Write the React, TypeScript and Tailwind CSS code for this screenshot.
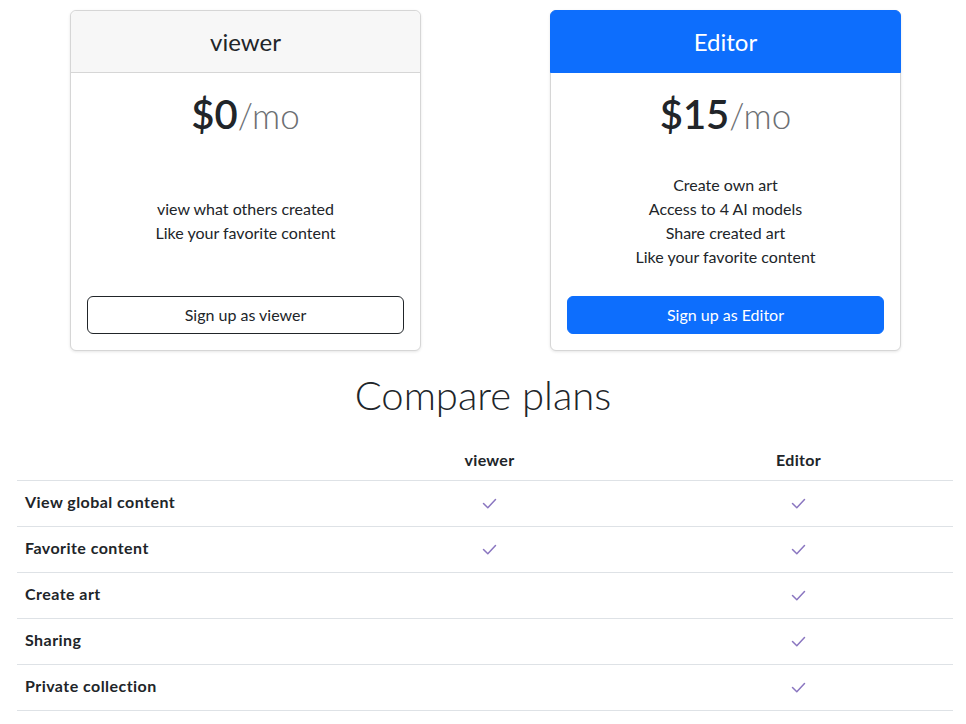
import React from "react";

const Check = () => (
  <svg width="15" height="13" viewBox="0 0 15 13" fill="none" className="inline-block">
    <path d="M1.5 6.5 L5.8 10.8 L13.5 2.5" stroke="#8a76c0" strokeWidth="1.5" strokeLinecap="round" strokeLinejoin="round" />
  </svg>
);

type Plan = {
  name: string;
  price: string;
  items: string[];
  cta: string;
  primary: boolean;
};

const plans: Plan[] = [
  {
    name: "viewer",
    price: "$0",
    items: ["view what others created", "Like your favorite content"],
    cta: "Sign up as viewer",
    primary: false,
  },
  {
    name: "Editor",
    price: "$15",
    items: ["Create own art", "Access to 4 AI models", "Share created art", "Like your favorite content"],
    cta: "Sign up as Editor",
    primary: true,
  },
];

const rows: { label: string; viewer: boolean; editor: boolean }[] = [
  { label: "View global content", viewer: true, editor: true },
  { label: "Favorite content", viewer: true, editor: true },
  { label: "Create art", viewer: false, editor: true },
  { label: "Sharing", viewer: false, editor: true },
  { label: "Private collection", viewer: false, editor: true },
];

function Card({ plan }: { plan: Plan }) {
  return (
    <div className="w-[351px] h-[341px] rounded-[6px] border border-[#d6d6d6] bg-white flex flex-col shadow-[0_1px_3px_rgba(0,0,0,0.1)]">
      <div
        className={
          "h-[62px] shrink-0 flex items-center justify-center text-[24px] border-b rounded-t-[6px] " +
          (plan.primary
            ? "bg-[#0d6efd] text-white border-[#0d6efd] -mx-px -mt-px h-[63px] border-x border-t"
            : "bg-[#f7f7f7] text-[#212529] border-[#d6d6d6]")
        }
      >
        {plan.name}
      </div>
      <div className="flex-1 flex flex-col px-4 pt-4 pb-4">
        <div className="h-[48px] leading-[50px] text-center text-[40px] font-semibold text-[#212529]">
          {plan.price}
          <span className="text-[35px] font-light text-[#6c6f73]">/mo</span>
        </div>
        <ul className="flex-1 flex flex-col justify-center mt-[16px] mb-[7px] text-center text-[16px] leading-[24px] text-[#212529]">
          {plan.items.map((it) => (
            <li key={it}>{it}</li>
          ))}
        </ul>
        <button
          className={
            "h-[38px] w-full rounded-[6px] text-[16px] border " +
            (plan.primary
              ? "bg-[#0d6efd] border-[#0d6efd] text-white"
              : "bg-white border-[#212529] text-[#212529]")
          }
        >
          {plan.cta}
        </button>
      </div>
    </div>
  );
}

export default function App() {
  return (
    <div
      className="min-h-screen bg-white text-[#212529]"
      style={{ fontFamily: 'Lato, "Open Sans", sans-serif' }}
    >
      <div className="flex pt-[10px] pl-[70px] gap-[129px]">
        {plans.map((p) => (
          <Card key={p.name} plan={p} />
        ))}
      </div>

      <h2 className="mt-[20px] h-[48px] leading-[48px] text-center text-[40px] font-light text-[#212529]">
        Compare plans
      </h2>

      <div className="mt-[21px] ml-[17px] w-[936px]">
        <div className="grid grid-cols-[318px_309px_309px] h-[41px] items-center border-b border-[#dee2e6] text-[16px] font-bold tracking-[0.3px]">
          <div />
          <div className="text-center">viewer</div>
          <div className="text-center">Editor</div>
        </div>
        {rows.map((r) => (
          <div
            key={r.label}
            className="grid grid-cols-[318px_309px_309px] h-[46px] items-center border-b border-[#dee2e6] text-[16px]"
          >
            <div className="pl-2 font-bold tracking-[0.45px] pb-[3px]">{r.label}</div>
            <div className="flex justify-center">{r.viewer ? <Check /> : null}</div>
            <div className="flex justify-center">{r.editor ? <Check /> : null}</div>
          </div>
        ))}
      </div>
    </div>
  );
}
